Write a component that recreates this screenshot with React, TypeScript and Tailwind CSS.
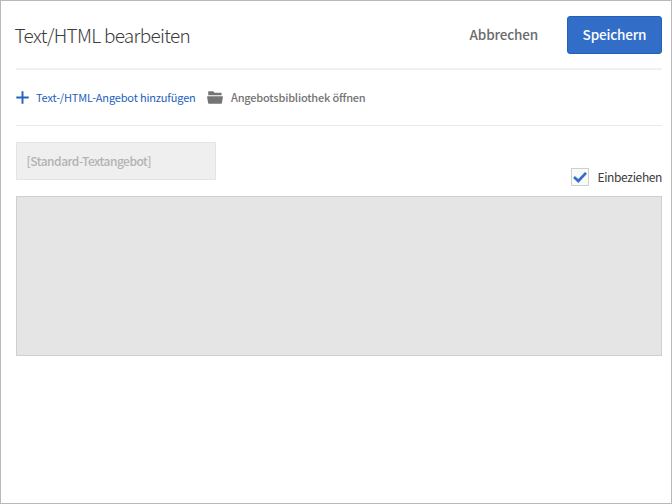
import React from "react";

function PlusIcon() {
  return (
    <svg width="13" height="13" viewBox="0 0 13 13" className="shrink-0">
      <path d="M6.5 0.3V12.7M0.3 6.5H12.7" stroke="#2361bd" strokeWidth="1.9" fill="none" />
    </svg>
  );
}

function FolderIcon() {
  return (
    <svg width="16" height="13" viewBox="0 0 16 13" className="shrink-0" fill="#747474">
      <path d="M1.2 4.2V0.8Q1.2 0.2 1.8 0.2H6.2L7.6 1.7H14Q14.6 1.7 14.6 2.3V4.2Z" />
      <path d="M0.6 5.3H15.4Q16 5.3 15.9 5.9L14.9 12Q14.8 12.7 14.1 12.7H1.9Q1.2 12.7 1.1 12L0.1 5.9Q0 5.3 0.6 5.3Z" />
    </svg>
  );
}

export default function App() {
  return (
    <div className="flex h-[504px] w-[672px] flex-col border border-[#b9b9b9] bg-white pl-[15px] pr-[9px] font-['Noto_Sans_CJK_SC','Noto_Sans_CJK_JP',sans-serif]">
      <header className="flex h-[69px] items-start justify-between border-b-2 border-[#f0f0f0]">
        <h1 className="mt-[20px] -ml-[1.5px] whitespace-nowrap text-[19px] font-light leading-[28px] tracking-[-0.7px] text-[#3c3c3c]">
          Text/HTML bearbeiten
        </h1>
        <div className="mt-[15px] flex items-center gap-[29px]">
          <button className="pb-[2px] text-[13.5px] font-medium leading-[36px] tracking-[-0.16px] text-[#6b6b6b]">Abbrechen</button>
          <button className="h-[38px] w-[95px] rounded-[3px] border border-[#2260bc] bg-[#326ec8] pb-[2px] text-[13.5px] font-medium leading-[34px] tracking-[-0.16px] text-white">
            Speichern
          </button>
        </div>
      </header>
      <nav className="flex h-[56px] items-center border-b border-[#e8e8e8] text-[11px] leading-[16px]">
        <button className="flex w-[191px] items-center gap-[7px] whitespace-nowrap tracking-[-0.16px] text-[#2361bd]">
          <PlusIcon />
          <span className="-mt-[2px]">Text-/HTML-Angebot hinzufügen</span>
        </button>
        <button className="flex items-center gap-[8px] whitespace-nowrap font-medium tracking-[-0.2px] text-[#747474]">
          <FolderIcon />
          <span className="-mt-[2px]">Angebotsbibliothek öffnen</span>
        </button>
      </nav>
      <div className="mt-[16px] flex h-[54px] items-start justify-between">
        <div className="h-[38px] w-[200px] border border-[#e3e3e3] bg-[#efefef] pl-[9.5px] text-[12px] font-medium leading-[36px] tracking-[-0.5px] text-[#b3b3b3]">
          [Standard-Textangebot]
        </div>
        <label className="mt-[26px] flex h-[18px] items-center gap-[9px] text-[12px] leading-[18px] text-[#3c3c3c]">
          <span className="flex h-[18px] w-[18px] items-center justify-center border border-[#cfcfcf] bg-[#fafafa]">
            <svg width="14" height="12" viewBox="0 0 14 12">
              <path d="M1 6L5.3 10L13 1.8" fill="none" stroke="#326ec8" strokeWidth="2.7" />
            </svg>
          </span>
          <span className="tracking-[-0.38px]">Einbeziehen</span>
        </label>
      </div>
      <div className="h-[160px] border border-[#cfcfcf] bg-[#e5e5e5]" />
    </div>
  );
}
